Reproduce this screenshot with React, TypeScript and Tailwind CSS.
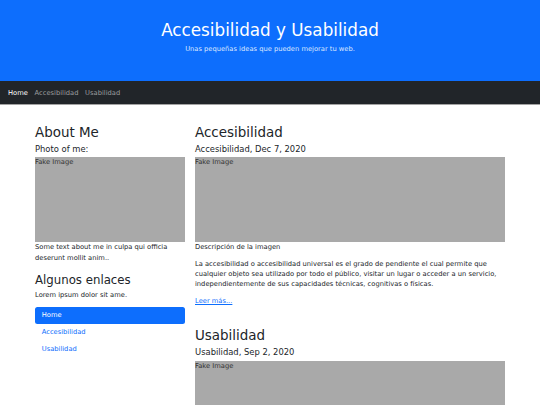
function FakeImage({ className = "" }: { className?: string }) {
  return (
    <div className={`h-[85px] w-full bg-[#a9a9a9] text-[6.72px] leading-[1.5] text-[#333] ${className}`}>
      Fake Image
    </div>
  );
}

function Post({
  title,
  meta,
  caption,
  body,
  className = "",
}: {
  title: string;
  meta: string;
  caption: string;
  body: string;
  className?: string;
}) {
  return (
    <article className={`text-[6.72px] leading-[1.5] ${className}`}>
      <h2 className="mb-[3.4px] text-[13.44px] leading-[1.2]">{title}</h2>
      <h5 className="mb-[3.4px] text-[8.4px] leading-[1.2]">{meta}</h5>
      <figure className="mb-[6.7px]">
        <FakeImage />
        <figcaption>{caption}</figcaption>
      </figure>
      <p className="mb-[6.7px]">{body}</p>
      <p>
        <a href="#" className="text-[#0d6efd] underline">
          Leer más...
        </a>
      </p>
    </article>
  );
}

export default function App() {
  const links = ["Home", "Accesibilidad", "Usabilidad"];

  return (
    <div className="min-h-[405px] bg-white font-['DejaVu_Sans',sans-serif] text-[#212529]">
      <header className="h-[81px] bg-[#0d6efd] pt-[20px] text-center">
        <h1 className="text-[16.8px] leading-[1.2] text-white">Accesibilidad y Usabilidad</h1>
        <p className="mt-[3.8px] text-[6.72px] leading-[1.5] text-[#dce7fd]">
          Unas pequeñas ideas que pueden mejorar tu web.
        </p>
      </header>

      <nav className="flex h-[24px] items-center gap-[6.7px] border-b border-[#a3a3a3] bg-[#212529] px-[8px] pt-[1px] text-[6.72px]">
        {links.map((link, i) => (
          <a key={link} href="#" className={i === 0 ? "text-white" : "text-[#9a9c9e]"}>
            {link}
          </a>
        ))}
      </nav>

      <main className="mx-auto flex w-[470px] gap-[10px] pt-[19.5px]">
        <aside className="w-[150px] shrink-0 text-[6.72px] leading-[1.5]">
          <h2 className="mb-[3.4px] text-[13.44px] leading-[1.2]">About Me</h2>
          <h5 className="mb-[3.4px] text-[8.4px] leading-[1.2]">Photo of me:</h5>
          <FakeImage />
          <p>Some text about me in culpa qui officia deserunt mollit anim..</p>

          <h3 className="mb-[3.4px] mt-[10px] text-[11.76px] leading-[1.2]">Algunos enlaces</h3>
          <p className="mb-[6.7px]">Lorem ipsum dolor sit ame.</p>
          <ul className="flex flex-col">
            {links.map((link, i) => (
              <li key={link}>
                <a
                  href="#"
                  className={
                    i === 0
                      ? "block rounded-[2.5px] bg-[#0d6efd] px-[6.72px] py-[3.36px] text-white"
                      : "block px-[6.72px] py-[3.36px] text-[#0d6efd]"
                  }
                >
                  {link}
                </a>
              </li>
            ))}
          </ul>
        </aside>

        <section className="w-[310px]">
          <Post
            title="Accesibilidad"
            meta="Accesibilidad, Dec 7, 2020"
            caption="Descripción de la imagen"
            body="La accesibilidad o accesibilidad universal es el grado de pendiente el cual permite que cualquier objeto sea utilizado por todo el público, visitar un lugar o acceder a un servicio, independientemente de sus capacidades técnicas, cognitivas o físicas."
          />
          <Post
            className="mt-[21.5px]"
            title="Usabilidad"
            meta="Usabilidad, Sep 2, 2020"
            caption="Descripción de la imagen"
            body="La usabilidad es la facilidad con que las personas pueden utilizar una herramienta particular o cualquier otro objeto fabricado por humanos con el fin de alcanzar un objetivo concreto."
          />
        </section>
      </main>
    </div>
  );
}
